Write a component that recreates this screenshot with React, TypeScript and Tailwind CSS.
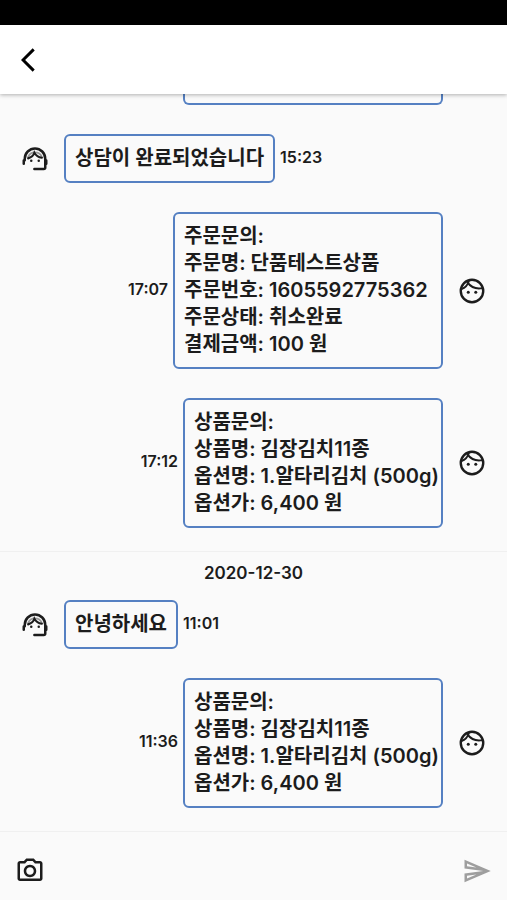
import React from "react";
import { MdArrowBackIosNew, MdOutlineCameraAlt, MdOutlineSend } from "react-icons/md";

interface Message {
  id: number;
  from: "agent" | "customer";
  kind: "text" | "order" | "product";
  time: string;
  lines: string[];
}

const firstDay: Message[] = [
  { id: 1, from: "agent", kind: "text", time: "15:23", lines: ["상담이 완료되었습니다"] },
  {
    id: 2,
    from: "customer",
    kind: "order",
    time: "17:07",
    lines: ["주문문의:", "주문명: 단품테스트상품", "주문번호: 1605592775362", "주문상태: 취소완료", "결제금액: 100 원"],
  },
  {
    id: 3,
    from: "customer",
    kind: "product",
    time: "17:12",
    lines: ["상품문의:", "상품명: 김장김치11종", "옵션명: 1.알타리김치 (500g)", "옵션가: 6,400 원"],
  },
];

const secondDay: Message[] = [
  { id: 4, from: "agent", kind: "text", time: "11:01", lines: ["안녕하세요"] },
  {
    id: 5,
    from: "customer",
    kind: "product",
    time: "11:36",
    lines: ["상품문의:", "상품명: 김장김치11종", "옵션명: 1.알타리김치 (500g)", "옵션가: 6,400 원"],
  },
];

const bubbleWidth = {
  text: "",
  order: "w-[270px]",
  product: "w-[260px]",
};

function AgentIcon({ className }: { className?: string }) {
  return (
    <svg viewBox="0 0 24 24" fill="none" stroke="currentColor" strokeLinecap="round" className={className}>
      <path d="M3.8 13v-1.2a8.2 8.2 0 0 1 16.4 0v7a1.2 1.2 0 0 1-1.2 1.2h-7.500" strokeWidth="2" />
      <path d="M3 13.200v2.600M21 13.200v2.600" strokeWidth="2" />
      <path d="M6.500 11.500c2.600-.8 4.300-2.300 5-4.500 1.300 2.400 3.300 3.700 6 4" strokeWidth="1.700" />
      <path d="M6.500 10.500a5.900 5.900 0 0 1 11 0" strokeWidth="1.500" strokeOpacity="0.45" />
      <circle cx="9" cy="13.300" r="1" fill="currentColor" stroke="none" />
      <circle cx="15" cy="13.300" r="1" fill="currentColor" stroke="none" />
    </svg>
  );
}

function CustomerIcon({ className }: { className?: string }) {
  return (
    <svg viewBox="0 0 24 24" fill="none" stroke="currentColor" strokeLinecap="round" className={className}>
      <circle cx="12" cy="12" r="9" strokeWidth="1.900" />
      <path d="M3.500 10.500c3-1 5-3.200 5.900-6.300" strokeWidth="1.600" />
      <path d="M8.700 5.500c2.500 3.500 6.500 5 11.500 4.200" strokeWidth="1.600" />
      <circle cx="9" cy="13" r="1.200" fill="currentColor" stroke="none" />
      <circle cx="15" cy="13" r="1.200" fill="currentColor" stroke="none" />
    </svg>
  );
}

function MessageRow({ message }: { message: Message }) {
  const isAgent = message.from === "agent";
  const Avatar = isAgent ? AgentIcon : CustomerIcon;

  return (
    <li className={isAgent ? "flex items-center" : "flex flex-row-reverse items-center"}>
      <Avatar className={isAgent ? "mr-[14px] size-[30px] shrink-0" : "ml-[14px] size-[30px] shrink-0"} />
      <div
        className={`rounded-md border-2 border-[#5580c2] px-[9px] py-[9px] text-xl leading-[27px] font-semibold whitespace-nowrap ${bubbleWidth[message.kind]}`}
      >
        {message.lines.map((line, i) => (
          <p key={i}>{line}</p>
        ))}
      </div>
      <time className="mx-[5px] pb-1 text-base font-semibold">{message.time}</time>
    </li>
  );
}

export default function App() {
  return (
    <div className="flex h-screen flex-col bg-[#fafafa] font-[Inter,'Noto_Sans_CJK_KR',sans-serif] text-[#1c1c1c]">
      <div className="h-[25px] shrink-0 bg-black" />
      <header className="z-10 flex h-[69px] shrink-0 items-center bg-white px-[14px] shadow-[0_1px_4px_rgba(0,0,0,0.3)]">
        <button type="button" aria-label="뒤로" className="text-black">
          <MdArrowBackIosNew className="size-7" />
        </button>
      </header>

      <main className="flex-1 overflow-hidden">
        <ul className="flex flex-col gap-[29px] px-5 pb-[23px]">
          {/* tail of the message scrolled under the header */}
          <li className="mr-11 h-[11px] w-[260px] self-end rounded-b-md border-2 border-t-0 border-[#5580c2]" />
          {firstDay.map((m) => (
            <MessageRow key={m.id} message={m} />
          ))}
        </ul>
        <h2 className="border-t border-[#f0f0f0] pt-[9px] pb-[15px] text-center text-[17px] leading-6 font-semibold">
          2020-12-30
        </h2>
        <ul className="flex flex-col gap-[29px] px-5">
          {secondDay.map((m) => (
            <MessageRow key={m.id} message={m} />
          ))}
        </ul>
      </main>

      <form className="flex h-[69px] shrink-0 items-center gap-3 border-t border-[#f0f0f0] px-[15px] pt-4 pb-[6px]">
        <button type="button" aria-label="사진">
          <MdOutlineCameraAlt className="size-[30px]" />
        </button>
        <input type="text" aria-label="메시지" className="min-w-0 flex-1 bg-transparent text-xl outline-none" />
        <button type="submit" aria-label="보내기" className="text-[#9e9e9e]">
          <MdOutlineSend className="size-[30px]" />
        </button>
      </form>
    </div>
  );
}
